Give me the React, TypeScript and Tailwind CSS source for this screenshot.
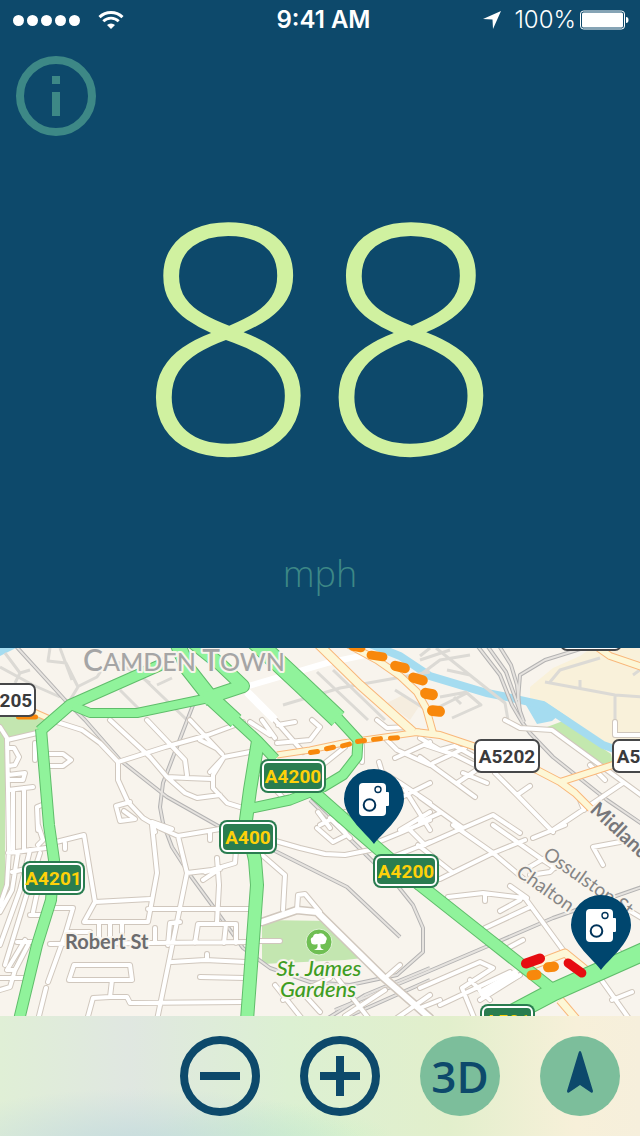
interface Label {
  x: number;
  y: number;
  w: number;
  text: string;
  variant: 'primary' | 'local';
}

interface Mark {
  x: number;
  y: number;
  w: number;
  h: number;
  rotate: number;
  color: string;
}

const GREEN_ROADS = [
  { w: 10, d: 'M165 663 L140 674 L70 705 L40 731' },
  { w: 10, d: 'M41 729 L49 825 L54 860 L51 900 L37 945 L19 1020' },
  { w: 8, d: 'M73 706 L90 713 L137 713 L204 699 L245 687' },
  { w: 14, d: 'M176 640 L188 669 L210 697 L236 721' },
  { w: 12, d: 'M190 640 L220 664 L243 686 L204 699' },
  { w: 9, d: 'M232 717 L258 741 L275 759' },
  { w: 12, d: 'M258 741 L250 790 L246 820 L255 860 L257 885 L247 1020' },
  { w: 17, d: 'M254 640 L300 683 L338 719' },
  { w: 9, d: 'M336 716 L358 740 L357 757 L343 775 L323 787 L290 800 L247 809' },
  { w: 11, d: 'M311 790 L353 827 L420 885 L487 938 L553 990' },
  { w: 17, d: 'M645 951 L553 992 L500 1020' },
];

const YELLOW_ROADS = [
  { w: 8, d: 'M314 640 L360 685 L413 732' },
  { w: 5, d: 'M277 755 L310 750 L343 743 L385 737 L420 732' },
  { w: 6, d: 'M415 732 L440 735 L473 746 L537 770 L560 782 L575 793 L592 810' },
  { w: 6, d: 'M560 782 L613 765 L645 758' },
  { w: 6, d: 'M340 640 L377 660 L400 676 L417 692 L426 708 L433 733' },
  { w: 6, d: 'M590 642 L610 656 L645 668' },
  { w: 7, d: 'M520 970 L565 953 L592 975' },
  { w: 7, d: 'M560 1000 L577 1020' },
  { w: 5, d: 'M25 708 L52 720' },
];

// streets north of the tile seam, drawn without a casing
const FAINT_STREETS = [
  'M5 653 L20 673 L15 683 M0 667 L33 685 L60 697 M20 673 L30 670',
  'M50 648 L48 661 L66 663 L78 687 L70 700 M60 648 L72 680 M77 687 L97 677 L107 662',
  'M120 690 L143 713 M140 675 L187 720 M157 685 L172 678 M118 662 L150 683',
  'M283 705 L340 688 L430 672 M317 672 L368 720 M333 670 L385 720 M395 690 L430 712',
  'M420 660 L450 650 M436 648 L505 703 L508 720 M420 675 L440 660 L470 655 M430 648 L420 656 M447 670 L470 675',
  'M435 709 L467 693 L481 705 L452 718 M440 697 L467 692 M454 697 L461 704',
  'M550 682 L560 670 L600 658 M545 682 L615 695 L645 697 M615 695 V720 M580 680 V690 M633 675 L640 670',
];

const STREETS = [
  'M57 722 L82 730 L100 743 L118 762 L118 780 L128 802 L143 818 L160 828 L178 836 L220 829',
  'M110 720 L150 757 L167 777 L185 793 L197 798 L220 795',
  'M147 720 L185 760 L187 775 M190 720 L222 754',
  'M118 762 L165 747 L208 735 L243 722 M167 777 L187 778 L212 779 M200 740 L216 748',
  'M210 772 L224 757 L250 752 M224 757 L213 775 L213 788 L227 803 L243 808',
  'M0 727 L7 738 L8 790 L9 850 L7 885 L0 905',
  'M7 740 L37 733 M7 748 L14 748 L19 757 L15 765 L8 766 M35 743 V760',
  'M48 754 L63 754 L71 760 L63 766 L48 766',
  'M8 775 L25 773 L23 780 L8 780 M8 790 L33 787 M13 790 V850 M24 788 V850 M42 805 L37 807 L38 830',
  'M130 802 L116 806 L120 821 L135 819 L124 811 M172 829 L152 822 L155 832',
  'M152 825 L157 873 L148 922 L84 922 L95 902 L84 835 L56 842 M95 902 L150 899 M148 909 L250 909 M65 843 V849',
  'M178 836 L187 873 L157 1020 M187 873 L220 869 M210 832 V840',
  'M8 853 L46 848 M12 872 L30 868 M18 852 L12 890 L0 912 M30 850 L20 890 L0 945 M40 853 L28 890 L5 965',
  'M30 915 H42 M42 870 L33 912 M17 942 H38 M50 944 L250 942 M38 825 L43 840 L38 845',
  'M25 940 L7 970 L15 970 L28 945 M0 978 H27 M0 990 L10 987 L15 970',
  'M55 908 L73 908 L65 935 L48 982 M46 988 L38 1020 M68 932 H90 M99 923 V940 M110 923 V942 M122 923 V940',
  'M74 965 L130 965 L132 980 L69 980 Z M112 980 L110 997 L93 998 L87 1020 M110 997 L127 997 L130 1003 L243 1002',
  'M172 962 L205 960 L246 962 M200 977 L245 978 M155 928 V943 M168 945 L170 923 L180 922 M195 943 L198 924 L205 924 M207 958 V954',
  'M205 872 L235 863 L236 850 M217 858 L219 885 L217 922 M205 924 L236 924 V943 M226 924 L224 943 M203 880 L218 870',
  'M262 855 L285 875 L283 910 M297 910 L298 895 L305 894 L320 912',
  'M260 941 H280',
  'M272 840 L300 848 L325 854 L345 855 L370 850',
  'M317 828 L333 842 L347 835 L340 825 M330 818 L350 838',
  'M378 842 L400 833 L430 820 M395 856 L430 842 M410 830 L425 845 M360 805 L345 820',
  'M275 985 L303 1020 M283 1000 L330 978 M327 965 L370 1020 M345 1016 L385 990 M300 990 L320 1012',
  'M397 1018 L430 995 M385 978 L400 965',
  'M505 720 L520 728 L552 730 L600 765 L645 798 M615 722 V735 H645',
  'M420 738 L440 750 L455 746 L475 757 M425 745 L455 755 L475 765',
  'M420 757 L475 797 M433 763 L465 748 M457 783 L487 763 M463 773 L487 783',
  'M495 773 L517 795 L553 832 M517 795 L530 786 M553 830 L623 783 M580 800 L584 810',
  'M420 797 L463 828 L493 815 L520 833 M420 822 L440 813 M590 765 L605 780',
  'M453 825 L493 853 L525 880 M420 847 L463 828 M418 845 L452 872 M440 879 L493 853 L525 840 M493 825 L540 858 L555 868',
  'M533 838 L565 825 M603 865 L593 847 L620 842 M528 868 L545 858 M530 875 L550 872 L560 862',
  'M448 897 L483 893 L525 898 L563 950 M485 895 V901 M510 886 L527 898 M500 911 L520 900 M485 928 L530 907 M508 948 L523 940',
  'M420 988 L480 962 L493 968 L462 988 L475 1020 M440 1005 L510 972 M480 1000 L520 975 M420 1008 L440 1000 M470 980 L490 1000',
  'M600 978 L630 1020 M612 1000 L632 992 M645 920 L620 905 M612 945 L622 955',
  'M250 722 L270 735 M262 720 L275 738 M275 720 L303 752 M277 743 L310 740 L320 727 L312 720 M278 725 L295 722',
  'M320 767 L345 747 M253 765 L285 800 M362 762 V745',
  'M379 762 L382 772 L400 783 L430 803 M400 798 L430 783 M387 740 L397 750 L430 765 M377 720 L387 728 L410 727 M395 758 L430 742',
  'M318 812 L330 828 M400 830 L430 812 M405 790 L430 830 M345 812 L320 825',
];

const RAILS = [
  'M14 644 L65 700 L85 720 L120 760 L167 797 L220 827 L277 852 L347 887 L400 937',
  'M195 700 L163 783 L160 807 L163 823 L172 847 L190 875 L212 905 L243 948 L270 968 L310 982 L350 985 L397 975 L423 952 L423 928 L413 905 L397 885 L310 800',
  'M476 644 L500 675 L512 705 L522 722 L530 733 L553 757 L607 800 L645 826',
  'M486 644 L506 672 L516 700 L524 722',
  'M498 644 L511 665 L517 685 L520 712',
  'M590 646 L545 660 L520 675 L518 700',
  'M645 886 L553 918 L495 943 L420 975 L335 1010',
  'M325 1020 L365 995 L430 968 M340 1020 L430 980',
];

const TRAFFIC: Mark[] = [
  { x: 357, y: 647, w: 17, h: 9, rotate: 10, color: '#f8880c' },
  { x: 377, y: 656, w: 21, h: 9, rotate: 8, color: '#f8880c' },
  { x: 400, y: 667, w: 20, h: 10, rotate: 14, color: '#f8880c' },
  { x: 418, y: 679, w: 20, h: 10, rotate: 16, color: '#f8880c' },
  { x: 429, y: 694, w: 18, h: 11, rotate: 12, color: '#f8880c' },
  { x: 436, y: 711, w: 18, h: 11, rotate: 6, color: '#f8880c' },
  { x: 314, y: 752, w: 12, h: 5, rotate: -8, color: '#f8880c' },
  { x: 330, y: 748, w: 12, h: 5, rotate: -12, color: '#f8880c' },
  { x: 346, y: 745, w: 12, h: 5, rotate: -14, color: '#f8880c' },
  { x: 361, y: 741, w: 12, h: 5, rotate: -8, color: '#f8880c' },
  { x: 377, y: 739, w: 12, h: 5, rotate: -6, color: '#f8880c' },
  { x: 394, y: 738, w: 12, h: 5, rotate: -4, color: '#f8880c' },
  { x: 27, y: 717, w: 22, h: 5, rotate: 0, color: '#f8880c' },
  { x: 533, y: 961, w: 25, h: 10, rotate: -20, color: '#e60c10' },
  { x: 575, y: 968, w: 26, h: 9, rotate: 36, color: '#e60c10' },
  { x: 551, y: 967, w: 16, h: 10, rotate: -6, color: '#f8880c' },
  { x: 534, y: 975, w: 15, h: 10, rotate: -6, color: '#f8880c' },
];

const SHIELDS: Label[] = [
  { x: -28, y: 683, w: 64, text: 'A5205', variant: 'local' },
  { x: 474, y: 739, w: 66, text: 'A5202', variant: 'local' },
  { x: 612, y: 739, w: 66, text: 'A5202', variant: 'local' },
  { x: 560, y: 617, w: 62, text: 'A503', variant: 'local' },
  { x: 260, y: 759, w: 66, text: 'A4200', variant: 'primary' },
  { x: 219, y: 820, w: 58, text: 'A400', variant: 'primary' },
  { x: 373, y: 854, w: 66, text: 'A4200', variant: 'primary' },
  { x: 22, y: 861, w: 63, text: 'A4201', variant: 'primary' },
  { x: 480, y: 1004, w: 55, text: 'A501', variant: 'primary' },
];

function Shield({ x, y, w, text, variant }: Label) {
  const primary = variant === 'primary';
  return (
    <g>
      {primary ? (
        <>
          <rect x={x} y={y} width={w} height={34} rx={8} fill="#2a7d50" />
          <rect x={x + 3} y={y + 3} width={w - 6} height={28} rx={5} fill="#2a7d50" stroke="#fff" strokeWidth={2} />
        </>
      ) : (
        <rect x={x + 1} y={y + 1} width={w - 2} height={32} rx={6} fill="#fff" stroke="#464749" strokeWidth={2} />
      )}
      <text
        x={x + w / 2}
        y={y + 24}
        textAnchor="middle"
        className="font-['Roboto',sans-serif] text-[19px] font-bold"
        fill={primary ? '#ffd109' : '#3a3a3c'}
      >
        {text}
      </text>
    </g>
  );
}

function CameraPin({ x, y }: { x: number; y: number }) {
  return (
    <g transform={`translate(${x} ${y})`}>
      <path d="M0 45 C-6 36 -30 18 -30 0 A30 30 0 0 1 30 0 C30 18 6 36 0 45 Z" fill="#00466e" />
      <rect x={-15} y={-16} width={27} height={33} rx={4} fill="#fff" />
      <path d="M10 -9 H12 V-7 H14 Q15 -7 15 -6 V6 Q15 7 14 7 H12 V9 H10 Z" fill="#fff" />
      <circle cx={4} cy={-9.5} r={3} fill="#fff" stroke="#00335a" strokeWidth={1.4} />
      <circle cx={-4.5} cy={6} r={5.8} fill="#fff" stroke="#00335a" strokeWidth={2} />
    </g>
  );
}

function TrafficMap() {
  return (
    <svg
      viewBox="0 648 640 368"
      className="block w-full bg-[#f8f4ed]"
      role="img"
      aria-label="Traffic map of Camden Town"
    >
      {/* land and water */}
      <path d="M530 687 L553 668 L580 656 L600 642 L645 650 V762 L605 746 L560 716 L530 702 Z" fill="#f9f1da" />
      <path d="M387 703 L403 695 L420 705 L410 720 Z" fill="#f5eddf" />
      <path d="M0 717 H47 L37 735 L12 741 L5 735 V885 L0 897 Z" fill="#c3e6b0" />
      <path d="M262 920 L330 921 L363 958 L345 960 L262 964 Z" fill="#c3e6b0" />
      <path d="M547 727 L563 721 L611 754 L613 763 L603 764 Z" fill="#c3e8ae" />
      <path d="M0 648 H16 L0 656 Z" fill="#a5dcf0" />
      <path d="M523 700 L537 724 L552 721 L560 714 L572 720 L545 702 Z" fill="#a5dcf0" />
      <path
        d="M355 638 L400 656 L430 676 L487 693 L507 697 L543 705 L567 721 L603 745 L645 760"
        fill="none"
        stroke="#a5dcf0"
        strokeWidth={8}
      />

      <g fill="none" strokeLinejoin="round">
        {FAINT_STREETS.map((d) => (
          <path key={d} d={d} stroke="#dcdad5" strokeWidth={3} />
        ))}

        {RAILS.map((d) => (
          <path key={d} d={d} stroke="#b4b3b3" strokeWidth={4} />
        ))}
        {RAILS.map((d) => (
          <path key={d} d={d} stroke="#e6e3df" strokeWidth={2} />
        ))}

        <g strokeLinecap="round">
          <path d={STREETS.join(' ')} stroke="#d0c7bd" strokeWidth={6} />
          <path d="M262 922 L297 910 L317 912 L383 977 L430 1018" stroke="#d0c7bd" strokeWidth={9} />
          <path d={STREETS.join(' ')} stroke="#fff" strokeWidth={4} />
          <path d="M262 922 L297 910 L317 912 L383 977 L430 1018" stroke="#fff" strokeWidth={6} />
        </g>
        <path d="M247 692 L275 720" stroke="#fff" strokeWidth={8} />
        <path d="M245 687 L327 663 L365 655" stroke="#fff" strokeWidth={6} />
        <path d="M480 995 L518 973" stroke="#fff" strokeWidth={9} />

        {YELLOW_ROADS.map((r) => (
          <path key={r.d} d={r.d} stroke="#f9b77a" strokeWidth={r.w + 2} />
        ))}
        {YELLOW_ROADS.map((r) => (
          <path key={r.d} d={r.d} stroke="#fdf7d6" strokeWidth={r.w} />
        ))}

        {GREEN_ROADS.map((r) => (
          <path key={r.d} d={r.d} stroke="#60bd6b" strokeWidth={r.w + 2} />
        ))}
        {GREEN_ROADS.map((r) => (
          <path key={r.d} d={r.d} stroke="#90f39b" strokeWidth={r.w} />
        ))}
      </g>

      {TRAFFIC.map((t) => (
        <rect
          key={`${t.x}-${t.y}`}
          x={t.x - t.w / 2}
          y={t.y - t.h / 2}
          width={t.w}
          height={t.h}
          rx={t.h / 2}
          fill={t.color}
          transform={`rotate(${t.rotate} ${t.x} ${t.y})`}
        />
      ))}

      {/* place and street names */}
      <g
        className="font-['Lato',sans-serif]"
        stroke="#f8f4ed"
        strokeWidth={4}
        strokeLinejoin="round"
        paintOrder="stroke"
      >
        <text x={83} y={671} className="text-[25px] font-medium" fill="#a5a5a5">
          <tspan className="text-[30px]">C</tspan>AMDEN <tspan className="text-[30px]">T</tspan>OWN
        </text>
        <text x={65} y={949} className="text-[20px] font-bold" fill="#6c6c6e">
          Robert St
        </text>
        <text className="text-[22px] font-medium italic" fill="#3f9d22" textAnchor="middle">
          <tspan x={319} y={976}>St. James</tspan>
          <tspan x={318} y={997}>Gardens</tspan>
        </text>
        <text transform="translate(542 857) rotate(35)" className="text-[19px]" fill="#858585">
          Ossulston St
        </text>
        <text transform="translate(515 875) rotate(35)" className="text-[19px]" fill="#858585">
          Chalton
        </text>
        <text transform="translate(589 811) rotate(43)" className="text-[20px] font-bold" fill="#77777a">
          Midland Rd
        </text>
      </g>

      <circle cx={319} cy={942} r={13} fill="#6fbf53" stroke="#dff2d5" strokeWidth={1} />
      <path
        d="M317.500 944 Q311 946 311 941 Q310 938 313 937 Q314 933 318 934 Q323 932 325 936 Q328 938 326 941 Q326 945 320.500 944 V947 Q321 949 324 950 H314 Q317 949 317.500 947 Z"
        fill="#fff"
      />

      {SHIELDS.map((s) => (
        <Shield key={`${s.text}-${s.x}`} {...s} />
      ))}
      <CameraPin x={374} y={799} />
      <CameraPin x={601} y={925} />
    </svg>
  );
}

function StatusBar() {
  return (
    <div className="flex h-10 items-center pr-[10px] pl-[13px] font-['Inter',sans-serif] text-2xl text-white">
      <div className="flex flex-1 items-center gap-[18px]">
        <div className="flex gap-[3px]">
          {[0, 1, 2, 3, 4].map((i) => (
            <span key={i} className="size-[11px] rounded-full bg-white" />
          ))}
        </div>
        <svg viewBox="0 0 26 20" className="h-5 w-[26px]" fill="none" stroke="currentColor">
          <path d="M1.500 7.200 A16.500 16.500 0 0 1 24.500 7.200" strokeWidth={3} />
          <path d="M5.300 11.200 A11 11 0 0 1 20.700 11.200" strokeWidth={2.8} />
          <path d="M9 15 A5.800 5.800 0 0 1 17 15 L13 19 Z" fill="currentColor" stroke="none" />
        </svg>
      </div>
      <div className="pr-1 pl-2 text-center font-semibold">9:41 AM</div>
      <div className="flex flex-1 items-center justify-end">
        <svg viewBox="0 0 20 20" className="mr-3 size-5" fill="currentColor">
          <path d="M19 1 L11 19 L10.500 9.500 L1 9 Z" />
        </svg>
        <span className="mr-1 font-light">100%</span>
        <svg viewBox="0 0 50 20" className="h-5 w-[50px]">
          <rect x={0.5} y={1} width={44} height={18} rx={3} fill="none" stroke="#fff" />
          <rect x={2} y={2.5} width={41} height={15} rx={1.5} fill="#fff" />
          <path d="M46 7 Q48.500 7 48.500 10 Q48.500 13 46 13 Z" fill="#fff" />
        </svg>
      </div>
    </div>
  );
}

export default function App() {
  return (
    <main className="flex min-h-screen flex-col bg-[#0d496b]">
      <StatusBar />

      <section className="flex flex-col px-4 pt-4 pb-14 font-['Open_Sans',sans-serif]">
        <button
          type="button"
          aria-label="Information"
          className="flex size-20 items-center justify-center rounded-full border-8 border-[#3d8886]"
        >
          <svg viewBox="0 0 8 40" className="h-10 w-2" fill="#3d8886">
            <rect width={8} height={8} />
            <rect y={16} width={8} height={24} />
          </svg>
        </button>
        <div className="mt-[34px] text-center text-[320px] leading-none font-light text-[#d0f1a0]">88</div>
        <div className="mt-[66px] text-center text-4xl leading-none font-light text-[#3d8886]">mph</div>
      </section>

      <TrafficMap />

      <nav className="flex grow items-center justify-end gap-10 bg-[radial-gradient(ellipse_at_22%_110%,#c5dcdd_0%,transparent_32%),radial-gradient(ellipse_at_42%_110%,#cbf2c8_0%,transparent_25%),linear-gradient(90deg,#e0efd6_0%,#e0e7e1_20%,#dcf0d2_45%,#e2efcc_70%,#f7f0d9_90%,#f6efdc_100%)] px-5 py-5">
        <button
          type="button"
          aria-label="Zoom out"
          className="flex size-20 items-center justify-center rounded-full border-8 border-[#0d496b]"
        >
          <svg viewBox="0 0 40 40" className="size-10" fill="#0d496b">
            <rect y={16} width={40} height={8} />
          </svg>
        </button>
        <button
          type="button"
          aria-label="Zoom in"
          className="flex size-20 items-center justify-center rounded-full border-8 border-[#0d496b]"
        >
          <svg viewBox="0 0 40 40" className="size-10" fill="#0d496b">
            <rect y={16} width={40} height={8} />
            <rect x={16} width={8} height={40} />
          </svg>
        </button>
        <button
          type="button"
          className="size-20 rounded-full bg-[#7cbe9b] text-center font-['Open_Sans',sans-serif] text-[44px] leading-none font-semibold text-[#0d496b]"
        >
          3D
        </button>
        <button
          type="button"
          aria-label="Heading"
          className="flex size-20 items-center justify-center rounded-full bg-[#7cbe9b]"
        >
          <svg viewBox="0 0 80 80" className="size-20" fill="#0d496b">
            <path d="M40 15 Q41 15 41.500 17 L53 55 Q53 57.500 51 56.500 L40 49 L29 56.500 Q27 57.500 27 55 L38.500 17 Q39 15 40 15 Z" />
          </svg>
        </button>
      </nav>
    </main>
  );
}
